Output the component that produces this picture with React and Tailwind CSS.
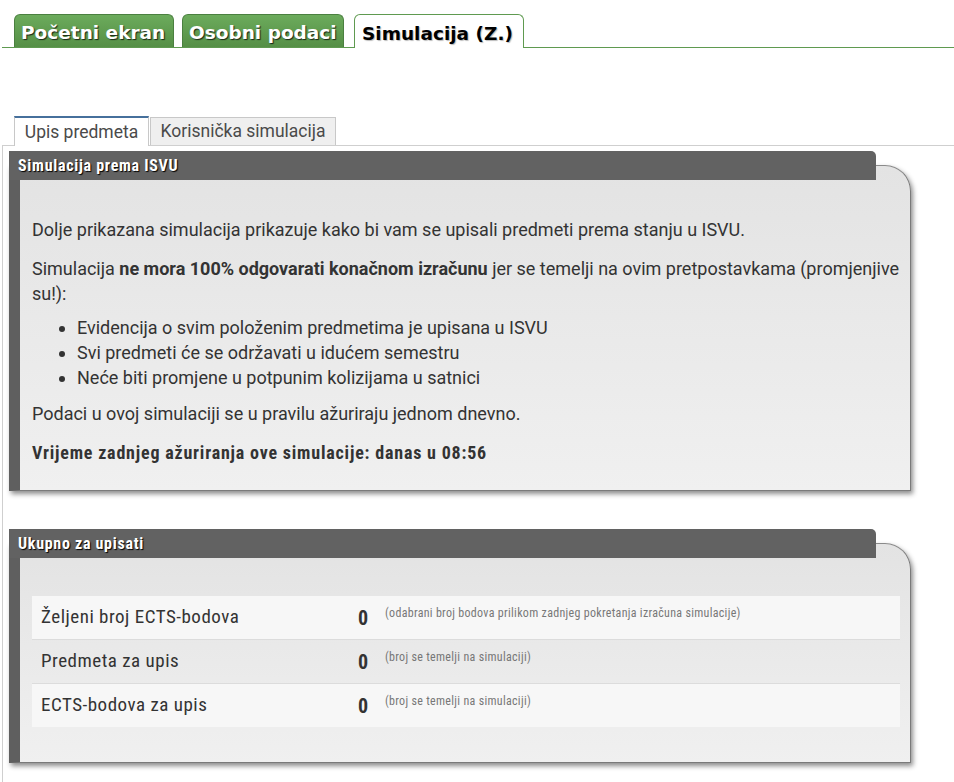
import React from "react";

const cond = { fontFamily: '"Roboto Condensed","Liberation Sans Narrow","DejaVu Sans Condensed",Roboto,sans-serif' };

function Panel({ title, children, bodyClass }) {
  return (
    <div className="w-[902px] flex flex-col">
      <div
        className="relative z-10 h-[29px] w-[867px] bg-[#626262] rounded-tr-[5px] pl-[9px] flex items-center text-white font-bold text-[16px] tracking-[0.7px] [text-shadow:1px_1px_1px_#000]"
        style={cond}
      >
        {title}
      </div>
      <div
        className={
          "-mt-[15px] rounded-tr-[26px] border-l-[11px] border-l-[#5f5f5f] border-r border-b border-t border-r-[#7a7a7a] border-b-[#7a7a7a] border-t-[#8a8a8a] bg-gradient-to-b from-[#e3e3e3] to-[#f0f0f0] shadow-[2px_3px_5px_rgba(0,0,0,0.45)] " +
          bodyClass
        }
      >
        {children}
      </div>
    </div>
  );
}

function Row({ label, note, striped }) {
  return (
    <div className={"flex items-start h-[43px] px-[9px] " + (striped ? "bg-[#f7f7f7]" : "")}>
      <div className="w-[317px] text-[19px] tracking-[0.5px] leading-[24px] pt-[9px] text-[#333]" style={cond}>
        {label}
      </div>
      <div className="w-[27px] text-[20px] leading-[24px] pt-[10px] font-bold text-[#333]" style={cond}>
        0
      </div>
      <div className="text-[12px] tracking-[0.3px] leading-[14px] pt-[10px] text-[#777]" style={cond}>
        {note}
      </div>
    </div>
  );
}

export default function App() {
  return (
    <div className="bg-white w-[954px] h-[782px] overflow-hidden" style={{ fontFamily: "Roboto, sans-serif" }}>
      {/* top tabs */}
      <div className="ml-[2px] pt-[14px] flex items-end border-b border-[#5f9a50] h-[48px]" style={{ fontFamily: '"DejaVu Sans",Verdana,sans-serif' }}>
        <div className="ml-[12px] w-[160px] h-[33px] rounded-t-[6px] border border-b-0 border-[#4b8040] bg-gradient-to-b from-[#6cab5c] to-[#558f46] flex items-center pt-[4px] pl-[6px] text-white font-bold text-[18.5px] [text-shadow:1px_1px_1px_#1a2617]">
          Početni ekran
        </div>
        <div className="ml-[8px] w-[162px] h-[33px] rounded-t-[6px] border border-b-0 border-[#4b8040] bg-gradient-to-b from-[#6cab5c] to-[#558f46] flex items-center pt-[4px] pl-[6px] text-white font-bold text-[18.5px] [text-shadow:1px_1px_1px_#1a2617]">
          Osobni podaci
        </div>
        <div className="ml-[10px] w-[170px] h-[34px] -mb-px rounded-t-[6px] border border-b-0 border-[#5f9a50] bg-white flex items-center pt-[4px] pl-[7px] text-black font-bold text-[18.5px] [text-shadow:1px_1px_1px_#bbb]">
          Simulacija (Z.)
        </div>
      </div>

      {/* sub tabs */}
      <div className="mt-[67px] ml-[14px] flex items-end h-[30px]">
        <div className="h-[30px] w-[135px] -mb-px relative z-10 border border-[#c8c8c8] border-t-2 border-t-[#46709c] border-b-0 bg-white flex items-center justify-center text-[17.5px] text-[#4a4a4a]">
          Upis predmeta
        </div>
        <div className="ml-[1px] h-[28px] w-[186px] border border-[#c8c8c8] border-b-0 bg-[#efefef] flex items-center justify-center text-[17.5px] text-[#4a4a4a]">
          Korisnička simulacija
        </div>
      </div>

      {/* content */}
      <div className="ml-[2px] border-l border-t border-[#cfcfcf] h-[640px] pt-[5px] pl-[6px]">
        <Panel title="Simulacija prema ISVU" bodyClass="h-[326px] pt-[51px] pl-[12px] pr-[10px]">
          <div className="text-[18px] leading-[25px] text-[#333]">
            <p className="mb-[14px]">Dolje prikazana simulacija prikazuje kako bi vam se upisali predmeti prema stanju u ISVU.</p>
            <p className="mb-[9px]">
              Simulacija <b>ne mora 100% odgovarati konačnom izračunu</b> jer se temelji na ovim pretpostavkama (promjenjive su!):
            </p>
            <ul className="list-disc pl-[45px] mb-[11px]">
              <li>Evidencija o svim položenim predmetima je upisana u ISVU</li>
              <li>Svi predmeti će se održavati u idućem semestru</li>
              <li>Neće biti promjene u potpunim kolizijama u satnici</li>
            </ul>
            <p className="mb-[14px]">Podaci u ovoj simulaciji se u pravilu ažuriraju jednom dnevno.</p>
            <p className="font-bold tracking-[0.8px]" style={cond}>Vrijeme zadnjeg ažuriranja ove simulacije: danas u 08:56</p>
          </div>
        </Panel>

        <div className="h-[38px]" />

        <Panel title="Ukupno za upisati" bodyClass="h-[220px] pt-[52px] pl-[12px] pr-[10px]">
          <div className="flex flex-col">
            <Row striped label="Željeni broj ECTS-bodova" note="(odabrani broj bodova prilikom zadnjeg pokretanja izračuna simulacije)" />
            <div className="border-t border-[#dcdcdc]" />
            <Row label="Predmeta za upis" note="(broj se temelji na simulaciji)" />
            <div className="border-t border-[#dcdcdc]" />
            <Row striped label="ECTS-bodova za upis" note="(broj se temelji na simulaciji)" />
          </div>
        </Panel>
      </div>
    </div>
  );
}
